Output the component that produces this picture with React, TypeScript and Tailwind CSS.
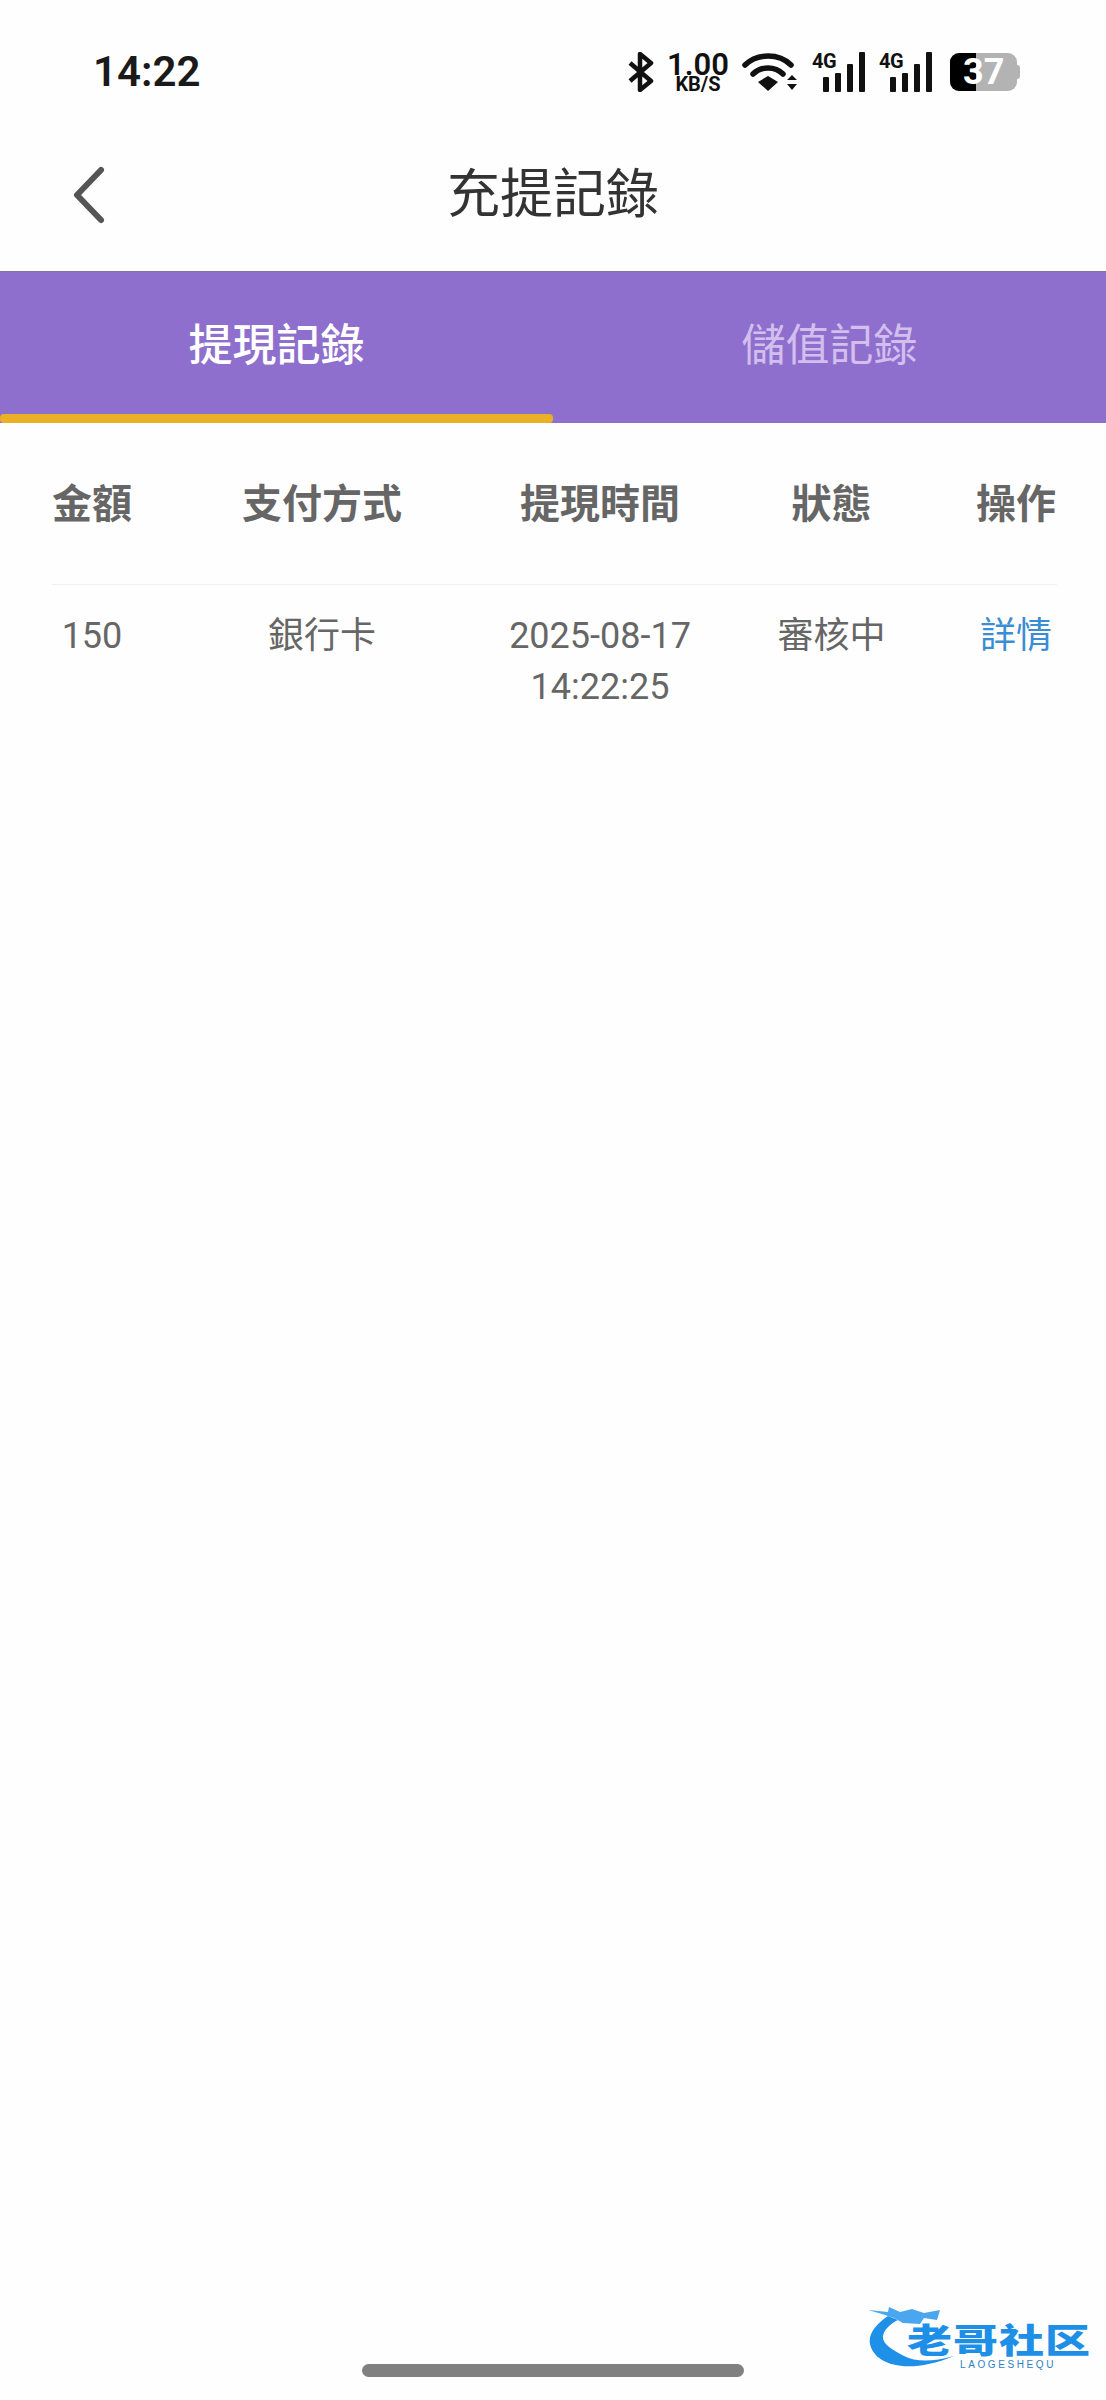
const cjk = "font-['Roboto','Noto_Sans_CJK_TC',sans-serif]";

function Bluetooth() {
  return (
    <svg width="26" height="40" viewBox="0 0 26 40" fill="none" stroke="#111" strokeWidth="4.5" strokeLinejoin="round">
      <path d="M2 11 L23 29 L12 38 V2 L23 11 L2 29" />
    </svg>
  );
}

function Wifi() {
  return (
    <svg width="56" height="40" viewBox="0 0 56 40" fill="none">
      <path d="M3 13 C15 1 37 1 49 13" stroke="#111" strokeWidth="5.5" strokeLinecap="round" />
      <path d="M11 22 C19 14 33 14 41 22" stroke="#111" strokeWidth="5.5" strokeLinecap="round" />
      <path d="M16 30 L26 24 L36 30 L26 39 Z" fill="#111" />
      <path d="M45 28 L50 23 L55 28 Z M45 32 L55 32 L50 38 Z" fill="#111" />
    </svg>
  );
}

function Signal() {
  return (
    <div className="relative h-[40px] w-[53px]">
      <span className="absolute left-0 top-0 font-['Roboto',sans-serif] text-[20px] font-bold leading-[18px] tracking-[-0.5px] text-[#111]">4G</span>
      <svg width="53" height="40" viewBox="0 0 53 40">
        <rect x="11" y="25" width="6" height="15" rx="1" fill="#111" />
        <rect x="23" y="21" width="6" height="19" rx="1" fill="#111" />
        <rect x="35" y="12" width="6" height="28" rx="1" fill="#111" />
        <rect x="47" y="0" width="6" height="40" rx="1" fill="#111" />
      </svg>
    </div>
  );
}

function Battery() {
  return (
    <div className="relative flex h-[38px] w-[70px] items-center">
      <div className="flex h-full w-[67px] overflow-hidden rounded-[9px] bg-[#b3b3b3]">
        <div className="h-full w-[26px] bg-black" />
      </div>
      <div className="h-[14px] w-[3px] rounded-r-sm bg-[#b3b3b3]" />
      <span className="absolute left-[13px] top-0 font-['Roboto',sans-serif] text-[36px] font-bold leading-[38px] text-white">37</span>
    </div>
  );
}

function Watermark() {
  return (
    <div className="absolute left-[866px] top-[2304px] h-[70px] w-[226px]">
      <svg className="absolute left-0 top-0" width="110" height="70" viewBox="0 0 110 70">
        <path d="M22 12 C10 20 2 30 4 40 C8 60 40 72 88 52 C66 58 50 58 38 52 C26 46 16 40 17 32 C18 26 24 20 32 16 Z" fill="#1e90e8" />
        <path d="M2 6 L22 8 L23 3 L34 8 L46 5 L58 9 L74 6 L71 16 L58 14 L54 20 L37 19 L28 14 L16 10 Z" fill="#4aa6ee" />
      </svg>
      <span className="absolute left-[41px] top-[17px] origin-center scale-y-[0.75] whitespace-nowrap font-['Noto_Sans_CJK_SC',sans-serif] text-[45px] font-black leading-[36px] tracking-[1px] text-[#1e8fe6]">老哥社区</span>
      <span className="absolute left-[94px] top-[55px] whitespace-nowrap font-['Liberation_Sans',sans-serif] text-[10px] leading-[11px] tracking-[2.6px] text-[#2f7fc4]">LAOGESHEQU</span>
    </div>
  );
}

const rowGrid = "grid grid-cols-[80px_380px_176px_287px_82px]";

export default function App() {
  return (
    <div className={`relative flex min-h-[2400px] flex-col bg-[#fefefe] ${cjk}`}>
      {/* status bar */}
      <div className="flex h-[90px] items-start justify-between pl-[93px] pr-[86px] pt-[52px]">
        <span className="font-['Roboto',sans-serif] text-[42px] font-semibold leading-[40px] text-[#1a1a1a]">14:22</span>
        <div className="flex items-center">
          <Bluetooth />
          <div className="ml-[14px] flex w-[60px] flex-col items-center text-[#111]">
            <span className="font-['Roboto',sans-serif] text-[31px] font-semibold leading-[25px]">1.00</span>
            <span className="font-['Roboto',sans-serif] text-[20px] font-bold leading-[15px]">KB/S</span>
          </div>
          <div className="ml-[14px]"><Wifi /></div>
          <div className="ml-[14px]"><Signal /></div>
          <div className="ml-[14px]"><Signal /></div>
          <div className="ml-[18px]"><Battery /></div>
        </div>
      </div>

      {/* title */}
      <div className="relative flex h-[181px] items-center justify-center pt-[30px]">
        <svg className="absolute left-[70px] top-[75px]" width="36" height="60" viewBox="0 0 36 60" fill="none">
          <path d="M31 5 L7 30 L31 55" stroke="#555" strokeWidth="6" strokeLinecap="round" strokeLinejoin="round" />
        </svg>
        <h1 className="text-[53px] font-normal leading-none text-[#333]">充提記錄</h1>
      </div>

      {/* tabs */}
      <div className="flex h-[152px] border-t border-[#86729f] bg-[#8f6fcd]">
        <div className="relative flex flex-1 items-center justify-center pb-[3px] text-[44px] font-medium text-white">
          提現記錄
          <div className="absolute bottom-0 left-0 right-0 h-[9px] rounded-[4px] bg-[#eab126]" />
        </div>
        <div className="flex flex-1 items-center justify-center pb-[3px] text-[44px] text-[#d2bfee]">儲值記錄</div>
      </div>

      {/* table */}
      <div className="ml-[52px] mr-[49px]">
        <div className={`${rowGrid} h-[162px] items-center border-b border-[#f0f0f0] pt-[2px] text-center text-[40px] font-bold leading-none text-[#666]`}>
          <span>金額</span>
          <span>支付方式</span>
          <span>提現時間</span>
          <span>狀態</span>
          <span>操作</span>
        </div>
        <div className={`${rowGrid} pt-[26px] text-center text-[36px] leading-[51px] text-[#666]`}>
          <span>150</span>
          <span>銀行卡</span>
          <div className="flex flex-col items-center whitespace-nowrap">
            <span>2025-08-17</span>
            <span>14:22:25</span>
          </div>
          <span>審核中</span>
          <span className="text-[#3a8dd3]">詳情</span>
        </div>
      </div>

      {/* home indicator */}
      <div className="mt-auto flex justify-center pb-[23px]">
        <div className="h-[13px] w-[382px] rounded-full bg-[#808080]" />
      </div>

      <Watermark />
    </div>
  );
}
